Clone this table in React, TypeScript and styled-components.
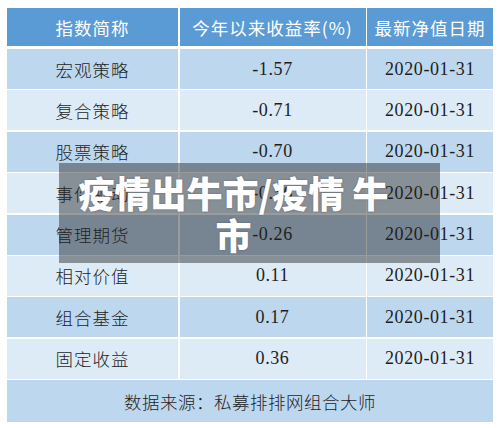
import styled, { createGlobalStyle } from "styled-components";

const GlobalStyle = createGlobalStyle`
  html, body {
    margin: 0;
    padding: 0;
    background: #ffffff;
  }
  body {
    font-family: "Liberation Serif", "Noto Sans CJK SC", serif;
  }
`;

const Page = styled.div`
  width: 500px;
  height: 428px;
  padding: 8px 7px 0 7px;
  box-sizing: border-box;
  overflow: hidden;
`;

const Frame = styled.div`
  position: relative;
`;

const Table = styled.div`
  display: grid;
  grid-template-columns: 171px 186px 126px;
  column-gap: 1.5px;
  background: #ffffff;
`;

const HeaderCell = styled.div`
  height: 38px;
  margin-bottom: 3px;
  background: #5b9bd5;
  color: #ffffff;
  display: flex;
  align-items: center;
  justify-content: center;
  font-family: "Noto Sans CJK SC", sans-serif;
  font-size: 17.5px;
  letter-spacing: 1px;
`;

const Cell = styled.div<{ $dark: boolean }>`
  height: 40px;
  margin-bottom: 1.4px;
  background: ${({ $dark }) => ($dark ? "#bdd7ee" : "#ddebf7")};
  color: #1e1e1e;
  display: flex;
  align-items: center;
  justify-content: center;
  font-size: 18px;
`;

const NameCell = styled(Cell)`
  font-family: "Noto Sans CJK SC", sans-serif;
  font-size: 17.5px;
  font-weight: 300;
  letter-spacing: 1px;
`;

const NumCell = styled(Cell)`
  font-family: "Liberation Serif", serif;
  letter-spacing: 0.6px;
`;

const SourceRow = styled.div`
  grid-column: 1 / -1;
  height: 42px;
  background: #bdd7ee;
  color: #1e1e1e;
  display: flex;
  align-items: center;
  justify-content: center;
  font-family: "Noto Sans CJK SC", sans-serif;
  font-size: 17.5px;
  font-weight: 300;
  letter-spacing: 0.5px;
`;

const Banner = styled.div`
  position: absolute;
  left: 52px;
  top: 155px;
  width: 381px;
  height: 100px;
  box-sizing: border-box;
  padding: 8px 48px 8px 16px;
  background: rgba(34, 34, 34, 0.45);
  color: #ffffff;
  font-family: "Noto Sans CJK SC", sans-serif;
  font-weight: 900;
  font-size: 36px;
  line-height: 42px;
  text-align: center;
  text-shadow: 0 0 2px rgba(0, 0, 0, 0.3);
`;

const rows = [
  { name: "宏观策略", ret: "-1.57", date: "2020-01-31" },
  { name: "复合策略", ret: "-0.71", date: "2020-01-31" },
  { name: "股票策略", ret: "-0.70", date: "2020-01-31" },
  { name: "事件驱动", ret: "-0.56", date: "2020-01-31" },
  { name: "管理期货", ret: "-0.26", date: "2020-01-31" },
  { name: "相对价值", ret: "0.11", date: "2020-01-31" },
  { name: "组合基金", ret: "0.17", date: "2020-01-31" },
  { name: "固定收益", ret: "0.36", date: "2020-01-31" },
];

export default function App() {
  return (
    <>
      <GlobalStyle />
      <Page>
        <Frame>
          <Table>
            <HeaderCell>指数简称</HeaderCell>
            <HeaderCell>今年以来收益率(%)</HeaderCell>
            <HeaderCell>最新净值日期</HeaderCell>
            {rows.map((r, i) => {
              const dark = i % 2 === 0;
              return [
                <NameCell key={r.name + "n"} $dark={dark}>
                  {r.name}
                </NameCell>,
                <NumCell key={r.name + "r"} $dark={dark}>
                  {r.ret}
                </NumCell>,
                <NumCell key={r.name + "d"} $dark={dark}>
                  {r.date}
                </NumCell>,
              ];
            })}
            <SourceRow>数据来源：私募排排网组合大师</SourceRow>
          </Table>
          <Banner>疫情出牛市/疫情 牛市</Banner>
        </Frame>
      </Page>
    </>
  );
}
